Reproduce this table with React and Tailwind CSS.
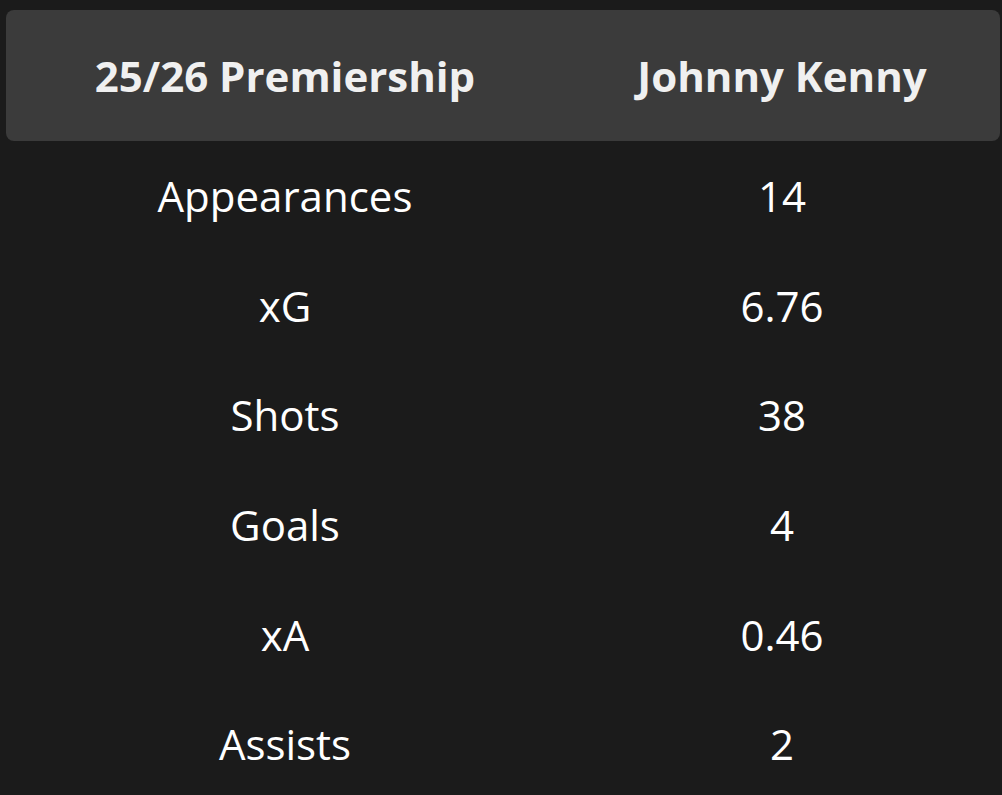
const rows = [
  ['Appearances', '14'],
  ['xG', '6.76'],
  ['Shots', '38'],
  ['Goals', '4'],
  ['xA', '0.46'],
  ['Assists', '2'],
];

export default function App() {
  return (
    <div className="min-h-screen bg-[#1b1b1b] pt-[10px] pl-[6px] font-['Open_Sans',sans-serif]">
      <div className="w-[994px]">
        <div className="grid h-[131px] grid-cols-[558px_1fr] items-center rounded-[8px] bg-[#3b3b3b] text-[42px] font-bold text-[#f0f0f0]">
          <div className="text-center">25/26 Premiership</div>
          <div className="text-center">Johnny Kenny</div>
        </div>
        {rows.map(([label, value]) => (
          <div key={label} className="grid h-[109.6px] grid-cols-[558px_1fr] items-center text-[42px] text-white">
            <div className="text-center">{label}</div>
            <div className="text-center">{value}</div>
          </div>
        ))}
      </div>
    </div>
  );
}
